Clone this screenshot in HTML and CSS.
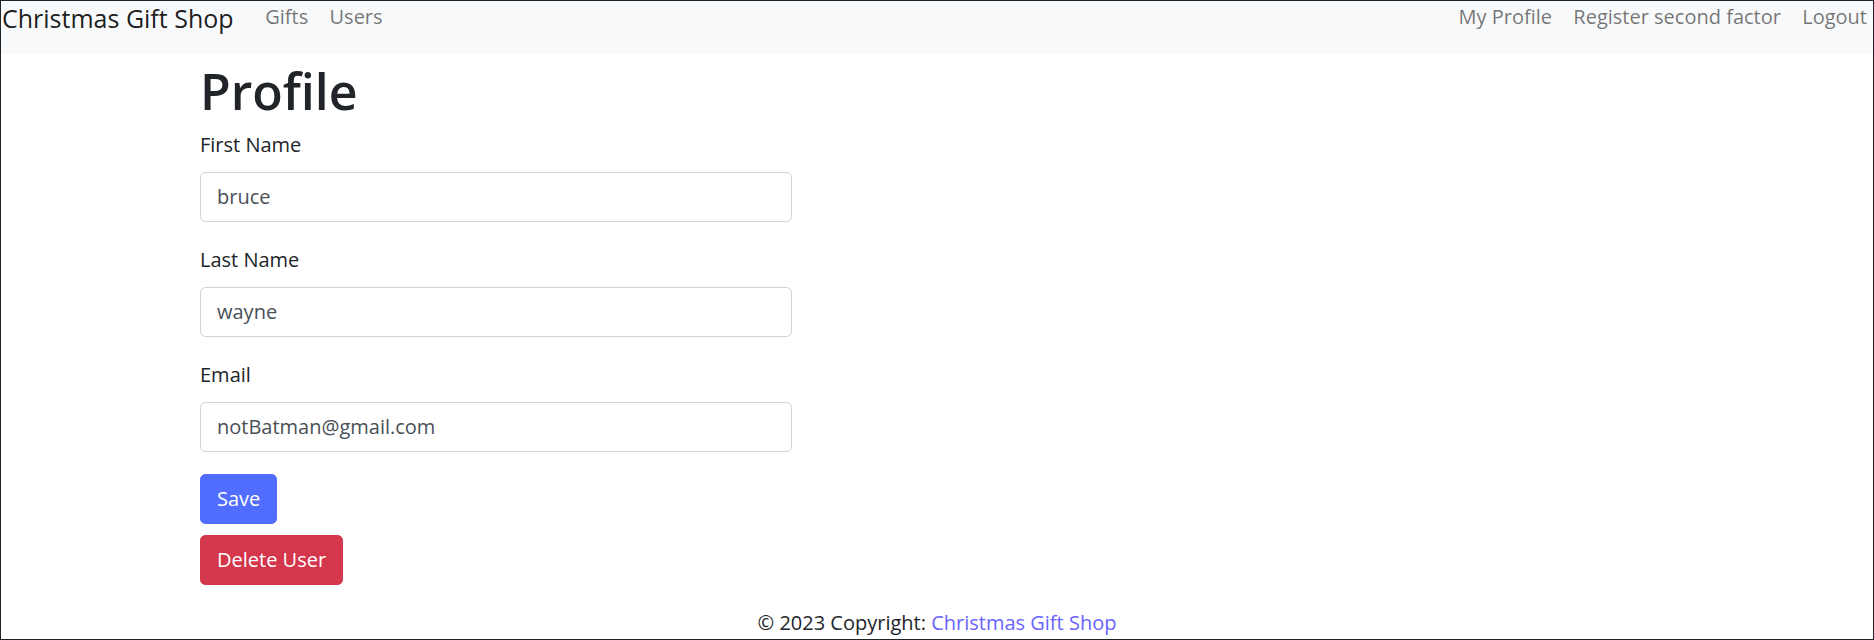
FILE: index.html
```html
<!DOCTYPE html>
<html lang="en">
<head>
<meta charset="utf-8">
<title>Profile - Christmas Gift Shop</title>
<link rel="stylesheet" href="styles.css">
</head>
<body>
<nav class="navbar">
  <a class="brand" href="#">Christmas Gift Shop</a>
  <ul class="nav nav-left">
    <li><a class="nav-link" href="#">Gifts</a></li>
    <li><a class="nav-link" href="#">Users</a></li>
  </ul>
  <ul class="nav nav-right">
    <li><a class="nav-link" href="#">My Profile</a></li>
    <li><a class="nav-link" href="#">Register second factor</a></li>
    <li><a class="nav-link" href="#">Logout</a></li>
  </ul>
</nav>
<main class="container">
  <h1 class="page-title">Profile</h1>
  <form class="profile-form">
    <div class="field">
      <label class="form-label" for="first">First Name</label>
      <input class="form-control" id="first" type="text" value="bruce">
    </div>
    <div class="field">
      <label class="form-label" for="last">Last Name</label>
      <input class="form-control" id="last" type="text" value="wayne">
    </div>
    <div class="field">
      <label class="form-label" for="email">Email</label>
      <input class="form-control" id="email" type="email" value="notBatman@gmail.com">
    </div>
    <button class="btn btn-primary" type="button">Save</button>
  </form>
  <button class="btn btn-danger" type="button">Delete User</button>
</main>
<footer class="footer">
  © 2023 Copyright: <a class="footer-link" href="#">Christmas Gift Shop</a>
</footer>
</body>
</html>
```

FILE: styles.css
```css
* { box-sizing: border-box; }

html {
  height: 640px;
}

body {
  margin: 0;
  height: 640px;
  border: 1px solid #1e2328;
  background: #ffffff;
  font-family: "Open Sans", "Noto Sans", sans-serif;
  font-size: 20px;
  line-height: 32px;
  color: #212529;
  overflow: hidden;
}

a { text-decoration: none; }

.navbar {
  display: flex;
  align-items: flex-start;
  height: 53px;
  background: #f8f9fa;
}

.brand {
  font-size: 25px;
  line-height: 34px;
  color: rgba(0, 0, 0, 0.9);
  padding-left: 1px;
  margin-right: 21px;
}

.nav {
  display: flex;
  list-style: none;
  margin: 0;
  padding: 0;
}

.nav-right {
  margin-left: auto;
}

.nav-link {
  display: block;
  padding: 1px 10.67px 0;
  line-height: 30px;
  color: rgba(0, 0, 0, 0.55);
}

.nav-right li:last-child .nav-link {
  padding-right: 6px;
}

.container {
  max-width: 1474px;
  margin: 0 auto;
}

.page-title {
  margin: 5px 0 6px;
  font-size: 50px;
  line-height: 64px;
  font-weight: 600;
  color: #212529;
}

.profile-form {
  width: 592px;
}

.field {
  margin-bottom: 22.5px;
}

.form-label {
  display: block;
  margin-bottom: 10.67px;
  line-height: 32px;
}

.form-control {
  display: block;
  width: 100%;
  height: 50px;
  padding: 8px 16px;
  font-family: inherit;
  font-size: 20px;
  line-height: 32px;
  color: #495057;
  background: #ffffff;
  border: 1px solid #ced4da;
  border-radius: 5.33px;
}

.btn {
  display: block;
  height: 50px;
  padding: 8px 16px;
  margin-bottom: 10.67px;
  font-family: inherit;
  font-size: 20px;
  line-height: 32px;
  color: #ffffff;
  border: 1px solid transparent;
  border-radius: 5.33px;
}

.btn-primary {
  background: #506dff;
  border-color: #506dff;
}

.btn-danger {
  background: #d4364b;
  border-color: #d4364b;
}

.footer {
  margin-top: 22px;
  text-align: center;
  line-height: 32px;
  color: #212529;
}

.footer-link {
  color: #6a63ff;
}
```
